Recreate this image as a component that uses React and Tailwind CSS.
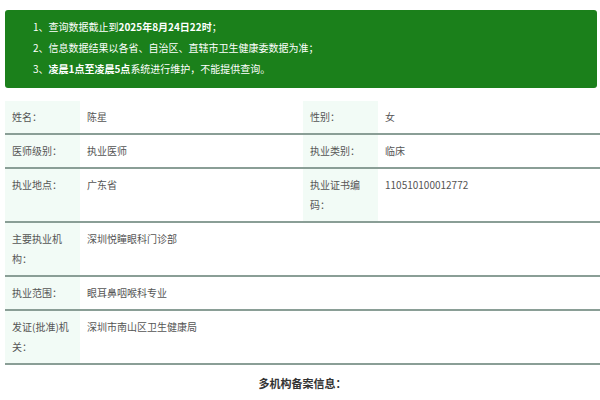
const font = { fontFamily: '"Noto Sans CJK SC", "Liberation Sans", sans-serif' };

function Label({ children }) {
  return (
    <div className="bg-[#f2fbf6] pl-[7px] pr-[10px] py-[6px] text-[#555]">{children}</div>
  );
}

function Value({ children, span }) {
  return (
    <div className={`bg-white pl-[7px] pr-[6px] py-[6px] text-[#555] ${span ? "col-span-3" : ""}`}>
      {children}
    </div>
  );
}

function Row({ children, cols }) {
  return (
    <div className="grid grid-cols-[75px_223px_75px_1fr] border-b-2 border-[#8a9e96]">
      {children}
    </div>
  );
}

export default function App() {
  return (
    <div className="w-[600px] h-[400px] overflow-hidden bg-white pl-[5px]" style={font}>
      <div className="mt-[10px] mr-[3px] h-[78px] rounded-[3px] bg-[#1b801b] pl-[28px] pt-[6px] text-[10px] leading-[21px] text-white">
        <div>1、查询数据截止到<b>2025年8月24日22时</b>；</div>
        <div>2、信息数据结果以各省、自治区、直辖市卫生健康委数据为准；</div>
        <div>3、<b>凌晨1点至凌晨5点</b>系统进行维护，不能提供查询。</div>
      </div>

      <div className="mt-[13px] text-[10px] leading-[20px]">
        <Row>
          <Label>姓名：</Label>
          <Value>陈星</Value>
          <Label>性别：</Label>
          <Value>女</Value>
        </Row>
        <Row>
          <Label>医师级别：</Label>
          <Value>执业医师</Value>
          <Label>执业类别：</Label>
          <Value>临床</Value>
        </Row>
        <Row>
          <Label>执业地点：</Label>
          <Value>广东省</Value>
          <Label>执业证书编码：</Label>
          <Value>110510100012772</Value>
        </Row>
        <Row>
          <Label>主要执业机构：</Label>
          <Value span>深圳悦瞳眼科门诊部</Value>
        </Row>
        <Row>
          <Label>执业范围：</Label>
          <Value span>眼耳鼻咽喉科专业</Value>
        </Row>
        <Row>
          <Label>发证(批准)机关：</Label>
          <Value span>深圳市南山区卫生健康局</Value>
        </Row>
      </div>

      <div className="pt-[8px] text-center text-[11px] font-bold leading-[20px] text-[#333]">
        多机构备案信息：
      </div>
    </div>
  );
}
